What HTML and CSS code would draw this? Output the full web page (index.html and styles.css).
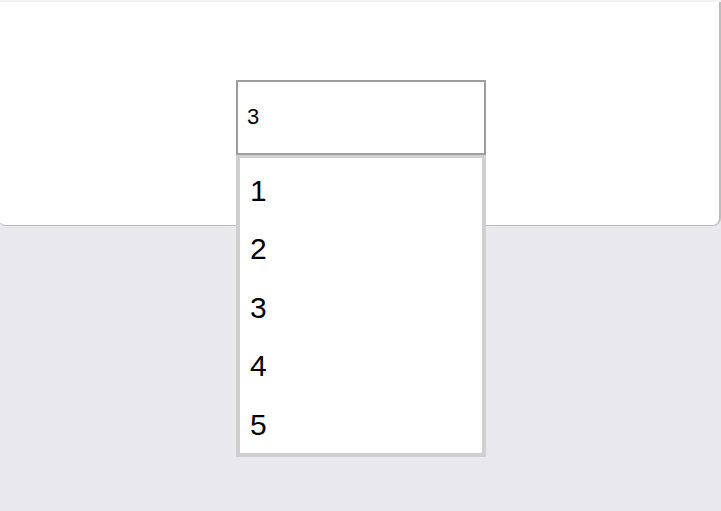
FILE: index.html
```html
<!DOCTYPE html>
<html>
<head>
<meta charset="utf-8">
<link rel="stylesheet" href="styles.css">
</head>
<body>
<div class="topbar"></div>
<div class="card">
  <div class="select">
    <div class="field">3</div>
    <ul class="options">
      <li class="option">1</li>
      <li class="option">2</li>
      <li class="option">3</li>
      <li class="option">4</li>
      <li class="option">5</li>
    </ul>
  </div>
</div>
</body>
</html>
```
FILE: styles.css
```css
html, body {
  margin: 0;
  padding: 0;
}
body {
  background: #e9e8ed;
  font-family: "Liberation Sans", Arial, sans-serif;
  color: #000;
  overflow: hidden;
  height: 511px;
}
.topbar {
  height: 2px;
  background: #f2f2f2;
}
.card {
  box-sizing: border-box;
  height: 224px;
  margin-left: -2px;
  background: #fff;
  border-right: 2px solid #bdbdbd;
  border-bottom: 1px solid #bdbdbd;
  border-radius: 0 0 8px 8px;
  padding-top: 78px;
  padding-left: 238px;
}
.select {
  position: relative;
  width: 250px;
}
.field {
  box-sizing: border-box;
  height: 75px;
  border: 2px solid #9d9d9d;
  padding: 22px 0 0 9px;
  font-size: 22px;
  line-height: 26px;
}
.options {
  position: absolute;
  top: 100%;
  left: 0;
  box-sizing: border-box;
  width: 250px;
  height: 302px;
  margin: 0;
  padding: 4px 0 0 0;
  list-style: none;
  background: #fff;
  border: 4px solid #cfcfcf;
  border-top-width: 3px;
  overflow: hidden;
}
.option {
  height: 58.4px;
  line-height: 58.4px;
  font-size: 30px;
  padding-left: 10px;
}
```
